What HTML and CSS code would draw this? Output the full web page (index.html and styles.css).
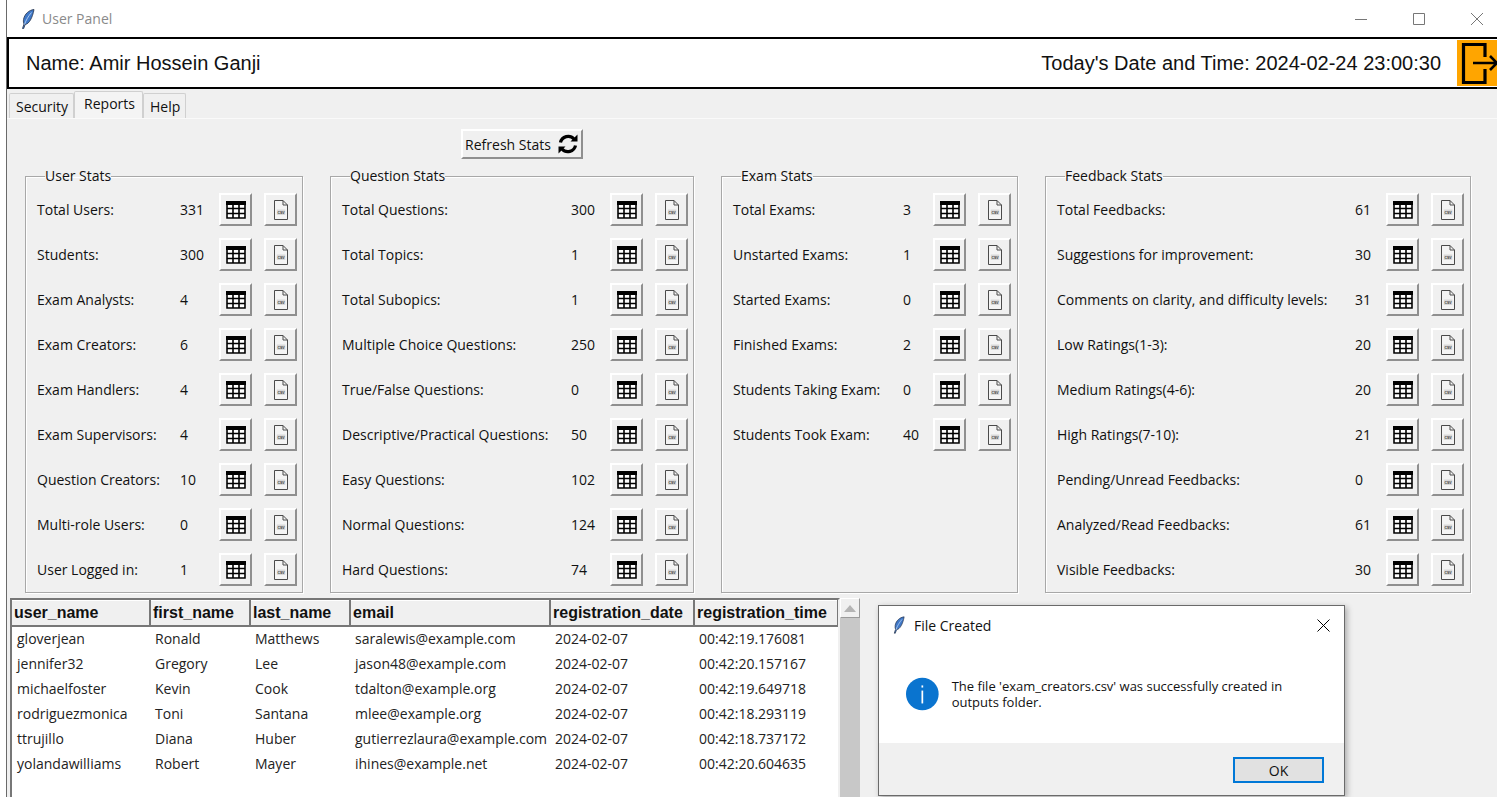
FILE: index.html
```html
<!DOCTYPE html>
<html>
<head>
<title>User Panel</title>
<link rel="stylesheet" href="styles.css">
</head>
<body>

<svg class="defs" width="0" height="0">
    <symbol id="feather" viewBox="0 0 14 20">
        <path d="M13 0.5C8 1 3.5 5 2.5 10.5C2.2 12.5 2.5 14 3 15L1.5 19.5L2.6 19.7L4.2 15.5C8 15 11.5 9 13 0.5Z" fill="#3f78c8" stroke="#26324a" stroke-width="0.8"/>
        <path d="M10.5 3.5C7.5 7 5 11 3.5 15.5" fill="none" stroke="#b9d3f2" stroke-width="0.9"/>
    </symbol>
    <symbol id="grid" viewBox="0 0 20 18">
        <path d="M0 0H20V18H0Z" fill="#fff"/>
        <path d="M0 0H20V4H0Z" fill="#000"/>
        <path d="M1 1V17H19V1M7 1V17M13 1V17M1 7.500H19M1 12.500H19" fill="none" stroke="#000" stroke-width="1.600"/>
    </symbol>
    <symbol id="csv" viewBox="0 0 14 20">
        <path d="M0.500 0.500H9L13.500 5V19.500H0.500Z" fill="#f4f4f4" stroke="#4a4a4a"/>
        <path d="M9 0.500V5H13.500" fill="none" stroke="#4a4a4a"/>
        <rect x="2.800" y="9.500" width="8.500" height="5.500" fill="#d8d8d8"/>
        <text x="7" y="14" text-anchor="middle" class="csv-text">CSV</text>
    </symbol>
</svg>

<div class="window">
    <div class="titlebar">
        <svg class="feather" width="14" height="20"><use href="#feather"/></svg>
        <span class="title">User Panel</span>
        <div class="controls">
            <svg width="12" height="12" viewBox="0 0 12 12"><path d="M0 6.500H12" stroke="#777"/></svg>
            <svg width="12" height="12" viewBox="0 0 12 12"><path d="M0.500 0.500H11.500V11.500H0.500Z" fill="none" stroke="#777"/></svg>
            <svg width="12" height="12" viewBox="0 0 12 12"><path d="M0 0L12 12M12 0L0 12" stroke="#777"/></svg>
        </div>
    </div>

    <div class="user-bar">
        <span class="user-name">Name: Amir Hossein Ganji</span>
        <span class="clock">Today's Date and Time: 2024-02-24 23:00:30</span>
        <button class="exit-btn">
            <svg width="40" height="45" viewBox="0 0 40 45">
                <path d="M28 16V3.500H6.500V41.500H28V28" fill="none" stroke="#000" stroke-width="3.200"/>
                <path d="M16 22H40M33 15L40 22L33 29" fill="none" stroke="#000" stroke-width="2.600"/>
            </svg>
        </button>
    </div>

    <div class="tabs">
        <div class="tab">Security</div>
        <div class="tab active">Reports</div>
        <div class="tab">Help</div>
    </div>

    <div class="panel">
        <button class="refresh-btn">
            Refresh Stats
            <svg width="22" height="22" viewBox="0 0 22 22">
                <path d="M3.500 9.500A7.800 7.800 0 0 1 17 6" fill="none" stroke="#000" stroke-width="3.200"/>
                <path d="M13.500 8.500H20.500V1.500Z" fill="#000"/>
                <path d="M18.500 12.500A7.800 7.800 0 0 1 5 16" fill="none" stroke="#000" stroke-width="3.200"/>
                <path d="M8.500 13.500H1.500V20.500Z" fill="#000"/>
            </svg>
        </button>

        <div class="groups">
            <fieldset class="group group-user">
                <legend>User Stats</legend>
                <div class="stats">
                    <span>Total Users:</span><span>331</span><button class="icon-btn"><svg width="20" height="18"><use href="#grid"/></svg></button><button class="icon-btn"><svg width="14" height="20"><use href="#csv"/></svg></button>
                    <span>Students:</span><span>300</span><button class="icon-btn"><svg width="20" height="18"><use href="#grid"/></svg></button><button class="icon-btn"><svg width="14" height="20"><use href="#csv"/></svg></button>
                    <span>Exam Analysts:</span><span>4</span><button class="icon-btn"><svg width="20" height="18"><use href="#grid"/></svg></button><button class="icon-btn"><svg width="14" height="20"><use href="#csv"/></svg></button>
                    <span>Exam Creators:</span><span>6</span><button class="icon-btn"><svg width="20" height="18"><use href="#grid"/></svg></button><button class="icon-btn"><svg width="14" height="20"><use href="#csv"/></svg></button>
                    <span>Exam Handlers:</span><span>4</span><button class="icon-btn"><svg width="20" height="18"><use href="#grid"/></svg></button><button class="icon-btn"><svg width="14" height="20"><use href="#csv"/></svg></button>
                    <span>Exam Supervisors:</span><span>4</span><button class="icon-btn"><svg width="20" height="18"><use href="#grid"/></svg></button><button class="icon-btn"><svg width="14" height="20"><use href="#csv"/></svg></button>
                    <span>Question Creators:</span><span>10</span><button class="icon-btn"><svg width="20" height="18"><use href="#grid"/></svg></button><button class="icon-btn"><svg width="14" height="20"><use href="#csv"/></svg></button>
                    <span>Multi-role Users:</span><span>0</span><button class="icon-btn"><svg width="20" height="18"><use href="#grid"/></svg></button><button class="icon-btn"><svg width="14" height="20"><use href="#csv"/></svg></button>
                    <span>User Logged in:</span><span>1</span><button class="icon-btn"><svg width="20" height="18"><use href="#grid"/></svg></button><button class="icon-btn"><svg width="14" height="20"><use href="#csv"/></svg></button>
                </div>
            </fieldset>

            <fieldset class="group group-question">
                <legend>Question Stats</legend>
                <div class="stats">
                    <span>Total Questions:</span><span>300</span><button class="icon-btn"><svg width="20" height="18"><use href="#grid"/></svg></button><button class="icon-btn"><svg width="14" height="20"><use href="#csv"/></svg></button>
                    <span>Total Topics:</span><span>1</span><button class="icon-btn"><svg width="20" height="18"><use href="#grid"/></svg></button><button class="icon-btn"><svg width="14" height="20"><use href="#csv"/></svg></button>
                    <span>Total Subopics:</span><span>1</span><button class="icon-btn"><svg width="20" height="18"><use href="#grid"/></svg></button><button class="icon-btn"><svg width="14" height="20"><use href="#csv"/></svg></button>
                    <span>Multiple Choice Questions:</span><span>250</span><button class="icon-btn"><svg width="20" height="18"><use href="#grid"/></svg></button><button class="icon-btn"><svg width="14" height="20"><use href="#csv"/></svg></button>
                    <span>True/False Questions:</span><span>0</span><button class="icon-btn"><svg width="20" height="18"><use href="#grid"/></svg></button><button class="icon-btn"><svg width="14" height="20"><use href="#csv"/></svg></button>
                    <span>Descriptive/Practical Questions:</span><span>50</span><button class="icon-btn"><svg width="20" height="18"><use href="#grid"/></svg></button><button class="icon-btn"><svg width="14" height="20"><use href="#csv"/></svg></button>
                    <span>Easy Questions:</span><span>102</span><button class="icon-btn"><svg width="20" height="18"><use href="#grid"/></svg></button><button class="icon-btn"><svg width="14" height="20"><use href="#csv"/></svg></button>
                    <span>Normal Questions:</span><span>124</span><button class="icon-btn"><svg width="20" height="18"><use href="#grid"/></svg></button><button class="icon-btn"><svg width="14" height="20"><use href="#csv"/></svg></button>
                    <span>Hard Questions:</span><span>74</span><button class="icon-btn"><svg width="20" height="18"><use href="#grid"/></svg></button><button class="icon-btn"><svg width="14" height="20"><use href="#csv"/></svg></button>
                </div>
            </fieldset>

            <fieldset class="group group-exam">
                <legend>Exam Stats</legend>
                <div class="stats">
                    <span>Total Exams:</span><span>3</span><button class="icon-btn"><svg width="20" height="18"><use href="#grid"/></svg></button><button class="icon-btn"><svg width="14" height="20"><use href="#csv"/></svg></button>
                    <span>Unstarted Exams:</span><span>1</span><button class="icon-btn"><svg width="20" height="18"><use href="#grid"/></svg></button><button class="icon-btn"><svg width="14" height="20"><use href="#csv"/></svg></button>
                    <span>Started Exams:</span><span>0</span><button class="icon-btn"><svg width="20" height="18"><use href="#grid"/></svg></button><button class="icon-btn"><svg width="14" height="20"><use href="#csv"/></svg></button>
                    <span>Finished Exams:</span><span>2</span><button class="icon-btn"><svg width="20" height="18"><use href="#grid"/></svg></button><button class="icon-btn"><svg width="14" height="20"><use href="#csv"/></svg></button>
                    <span>Students Taking Exam:</span><span>0</span><button class="icon-btn"><svg width="20" height="18"><use href="#grid"/></svg></button><button class="icon-btn"><svg width="14" height="20"><use href="#csv"/></svg></button>
                    <span>Students Took Exam:</span><span>40</span><button class="icon-btn"><svg width="20" height="18"><use href="#grid"/></svg></button><button class="icon-btn"><svg width="14" height="20"><use href="#csv"/></svg></button>
                </div>
            </fieldset>

            <fieldset class="group group-feedback">
                <legend>Feedback Stats</legend>
                <div class="stats">
                    <span>Total Feedbacks:</span><span>61</span><button class="icon-btn"><svg width="20" height="18"><use href="#grid"/></svg></button><button class="icon-btn"><svg width="14" height="20"><use href="#csv"/></svg></button>
                    <span>Suggestions for improvement:</span><span>30</span><button class="icon-btn"><svg width="20" height="18"><use href="#grid"/></svg></button><button class="icon-btn"><svg width="14" height="20"><use href="#csv"/></svg></button>
                    <span>Comments on clarity, and difficulty levels:</span><span>31</span><button class="icon-btn"><svg width="20" height="18"><use href="#grid"/></svg></button><button class="icon-btn"><svg width="14" height="20"><use href="#csv"/></svg></button>
                    <span>Low Ratings(1-3):</span><span>20</span><button class="icon-btn"><svg width="20" height="18"><use href="#grid"/></svg></button><button class="icon-btn"><svg width="14" height="20"><use href="#csv"/></svg></button>
                    <span>Medium Ratings(4-6):</span><span>20</span><button class="icon-btn"><svg width="20" height="18"><use href="#grid"/></svg></button><button class="icon-btn"><svg width="14" height="20"><use href="#csv"/></svg></button>
                    <span>High Ratings(7-10):</span><span>21</span><button class="icon-btn"><svg width="20" height="18"><use href="#grid"/></svg></button><button class="icon-btn"><svg width="14" height="20"><use href="#csv"/></svg></button>
                    <span>Pending/Unread Feedbacks:</span><span>0</span><button class="icon-btn"><svg width="20" height="18"><use href="#grid"/></svg></button><button class="icon-btn"><svg width="14" height="20"><use href="#csv"/></svg></button>
                    <span>Analyzed/Read Feedbacks:</span><span>61</span><button class="icon-btn"><svg width="20" height="18"><use href="#grid"/></svg></button><button class="icon-btn"><svg width="14" height="20"><use href="#csv"/></svg></button>
                    <span>Visible Feedbacks:</span><span>30</span><button class="icon-btn"><svg width="20" height="18"><use href="#grid"/></svg></button><button class="icon-btn"><svg width="14" height="20"><use href="#csv"/></svg></button>
                </div>
            </fieldset>
        </div>

        <div class="table-area">
            <div class="table-box">
                <table class="data">
                    <thead>
                        <tr>
                            <th class="col-user">user_name</th>
                            <th class="col-first">first_name</th>
                            <th class="col-last">last_name</th>
                            <th class="col-email">email</th>
                            <th class="col-date">registration_date</th>
                            <th class="col-time">registration_time</th>
                        </tr>
                    </thead>
                    <tbody>
                        <tr><td>gloverjean</td><td>Ronald</td><td>Matthews</td><td>saralewis@example.com</td><td>2024-02-07</td><td>00:42:19.176081</td></tr>
                        <tr><td>jennifer32</td><td>Gregory</td><td>Lee</td><td>jason48@example.com</td><td>2024-02-07</td><td>00:42:20.157167</td></tr>
                        <tr><td>michaelfoster</td><td>Kevin</td><td>Cook</td><td>tdalton@example.org</td><td>2024-02-07</td><td>00:42:19.649718</td></tr>
                        <tr><td>rodriguezmonica</td><td>Toni</td><td>Santana</td><td>mlee@example.org</td><td>2024-02-07</td><td>00:42:18.293119</td></tr>
                        <tr><td>ttrujillo</td><td>Diana</td><td>Huber</td><td>gutierrezlaura@example.com</td><td>2024-02-07</td><td>00:42:18.737172</td></tr>
                        <tr><td>yolandawilliams</td><td>Robert</td><td>Mayer</td><td>ihines@example.net</td><td>2024-02-07</td><td>00:42:20.604635</td></tr>
                    </tbody>
                </table>
            </div>
            <div class="scrollbar">
                <div class="scroll-up"><svg width="12" height="7" viewBox="0 0 12 7"><path d="M6 0L12 7H0Z" fill="#b4b4b4"/></svg></div>
            </div>
        </div>
    </div>
</div>

<div class="dialog">
    <div class="dialog-head">
        <svg class="dialog-feather" width="12" height="18"><use href="#feather"/></svg>
        <span class="dialog-title">File Created</span>
        <svg class="dialog-close" width="13" height="13" viewBox="0 0 13 13"><path d="M0.500 0.500L12.500 12.500M12.500 0.500L0.500 12.500" stroke="#000"/></svg>
    </div>
    <div class="dialog-body">
        <svg width="38" height="38" viewBox="0 0 38 38">
            <circle cx="19" cy="19" r="19" fill="#0a74cf"/>
            <rect x="18" y="15" width="2" height="15" fill="#fff"/>
            <rect x="18" y="9" width="2" height="2.500" fill="#fff"/>
        </svg>
        <p class="dialog-text">The file 'exam_creators.csv' was successfully created in outputs folder.</p>
    </div>
    <div class="dialog-foot">
        <button class="ok-btn">OK</button>
    </div>
</div>

</body>
</html>
```
FILE: styles.css
```css
* {
    box-sizing: border-box;
}

html, body {
    margin: 0;
    height: 797px;
    overflow: hidden;
    background-color: white;
}

body {
    position: relative;
    font-family: "Open Sans", "Noto Sans", sans-serif;
    font-size: 14px;
    color: #111;
}

button {
    font-family: inherit;
    font-size: inherit;
    color: inherit;
    padding: 0;
}

.defs {
    position: absolute;
}

.csv-text {
    font-family: "Liberation Sans", sans-serif;
    font-size: 3.5px;
    font-weight: bold;
    fill: #333;
}

.window {
    margin-left: 6px;
    height: 797px;
    border-left: 1px solid #6a6a6a;
    background-color: #f0f0f0;
    display: flex;
    flex-direction: column;
}

.titlebar {
    height: 37px;
    flex-shrink: 0;
    background-color: white;
    display: flex;
    align-items: center;
    padding-left: 14px;
}

.title {
    margin-left: 7px;
    color: #8a8a8a;
}

.controls {
    margin-left: auto;
    display: flex;
    gap: 46px;
    padding-right: 14px;
}

.user-bar {
    height: 52px;
    flex-shrink: 0;
    background-color: white;
    border: 2px solid black;
    border-right: none;
    display: flex;
    align-items: center;
    padding-left: 17px;
    font-family: "Liberation Sans", sans-serif;
    font-size: 20px;
}

.clock {
    margin-left: auto;
    margin-right: 16px;
}

.exit-btn {
    width: 40px;
    height: 46px;
    border: none;
    background-color: #ffa500;
    display: flex;
    align-items: center;
    justify-content: center;
}

.tabs {
    height: 29px;
    flex-shrink: 0;
    display: flex;
    align-items: flex-end;
    padding-left: 2px;
}

.tab {
    height: 25px;
    padding: 0 5px 0 6px;
    border: 1px solid #d0d0d0;
    border-bottom: none;
    border-radius: 2px 2px 0 0;
    background-color: #f0f0f0;
    line-height: 25px;
}

.tab.active {
    height: 28px;
    padding: 0 7px 3px 9px;
    background-color: #f4f4f4;
    line-height: 23px;
    border-bottom: 1px solid #f4f4f4;
    margin-bottom: -1px;
}

.panel {
    flex: 1;
    min-height: 0;
    border-top: 1px solid #fafafa;
    padding-top: 10px;
    display: flex;
    flex-direction: column;
}

.refresh-btn {
    align-self: flex-start;
    margin-left: 454px;
    width: 122px;
    height: 30px;
    flex-shrink: 0;
    display: flex;
    align-items: center;
    justify-content: center;
    gap: 6px;
    background-color: #f0f0f0;
    border: 2px solid;
    border-color: #fff #8f8f8f #8f8f8f #fff;
}

.groups {
    display: flex;
    gap: 27px;
    padding-left: 18px;
    margin-top: 8px;
    flex-shrink: 0;
}

.group {
    margin: 0;
    padding: 8px 0 6px 11px;
    border: 1px solid #a8a8a8;
    box-shadow: inset 1px 1px 0 #fff, 1px 1px 0 #fff;
    min-width: 0;
}

.group legend {
    padding: 0;
    margin-left: 8px;
    line-height: 18px;
}

.group-user { width: 278px; }
.group-question { width: 364px; }
.group-exam { width: 297px; }
.group-feedback { width: 426px; }

.stats {
    display: grid;
    row-gap: 12px;
    align-items: center;
}

.group-user .stats { grid-template-columns: 143px 39px 45px 33px; }
.group-question .stats { grid-template-columns: 229px 39px 45px 33px; }
.group-exam .stats { grid-template-columns: 170px 30px 45px 33px; }
.group-feedback .stats { grid-template-columns: 298px 31px 45px 33px; }

.icon-btn {
    width: 33px;
    height: 33px;
    background-color: #f0f0f0;
    border: 2px solid;
    border-color: #fff #8f8f8f #8f8f8f #fff;
    display: flex;
    align-items: center;
    justify-content: center;
}

.table-area {
    flex: 1;
    min-height: 0;
    display: flex;
    margin-top: 5px;
    margin-left: 3px;
}

.table-box {
    width: 830px;
    background-color: white;
    border: 2px solid #777;
    border-bottom: none;
    border-right-color: #f0f0f0;
    overflow: hidden;
}

.data {
    width: 826px;
    border-collapse: collapse;
    table-layout: fixed;
}

.data th {
    height: 25px;
    padding: 0 0 0 2px;
    background-color: #f0f0f0;
    border: 1px solid #777;
    border-top: 1px solid #ddd;
    border-width: 1px 2px 2px 0;
    border-top-color: #fff;
    text-align: left;
    font-family: "Liberation Sans", sans-serif;
    font-size: 16px;
    font-weight: bold;
    color: #111;
    white-space: nowrap;
    overflow: hidden;
}

.col-user { width: 138px; }
.col-first { width: 100px; }
.col-last { width: 100px; }
.col-email { width: 200px; }
.col-date { width: 144px; }
.col-time { width: 144px; }

.data td {
    height: 25px;
    padding: 0 4px 0 5px;
    white-space: nowrap;
    overflow: hidden;
    text-overflow: clip;
    color: #222;
}

.scrollbar {
    width: 20px;
    margin-left: 0;
    background-color: #c8c8c8;
}

.scroll-up {
    height: 20px;
    background-color: #f0f0f0;
    border: 1px solid;
    border-color: #fff #9a9a9a #9a9a9a #fff;
    display: flex;
    align-items: center;
    justify-content: center;
}

.dialog {
    position: absolute;
    left: 878px;
    top: 605px;
    width: 467px;
    height: 191px;
    background-color: white;
    border: 1px solid #6a6a6a;
    box-shadow: 2px 2px 6px rgba(0, 0, 0, 0.3);
    display: flex;
    flex-direction: column;
}

.dialog-head {
    height: 38px;
    display: flex;
    align-items: center;
    padding: 0 14px;
}

.dialog-title {
    margin-left: 9px;
    color: #111;
}

.dialog-close {
    margin-left: auto;
}

.dialog-body {
    flex: 1;
    display: flex;
    align-items: flex-start;
    padding: 31px 28px 0 27px;
    gap: 13px;
}

.dialog-text {
    margin: 3px 0 0;
    font-size: 13px;
    line-height: 16px;
}

.dialog-foot {
    height: 52px;
    background-color: #f0f0f0;
    display: flex;
    align-items: flex-start;
    justify-content: flex-end;
    padding: 14px 20px 0 0;
}

.ok-btn {
    width: 91px;
    height: 26px;
    background-color: #e1e1e1;
    border: 2px solid #0078d7;
}
```
